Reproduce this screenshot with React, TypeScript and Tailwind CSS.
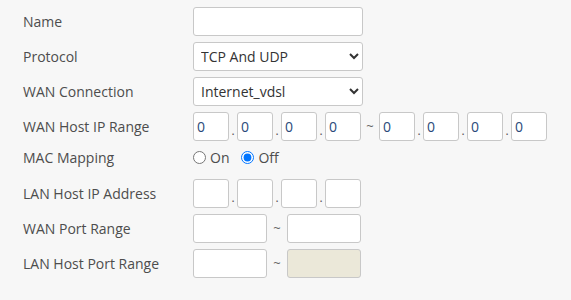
import React from 'react';

const box = 'h-[29px] rounded-[3px] border border-[#c8c8c8] px-[3px] text-[14px] text-[#2a4a7a] outline-none';

const Label = ({ children }: { children: React.ReactNode }) => (
  <div className="w-[170px] shrink-0 text-[14px] text-[#4d4d4d]">{children}</div>
);

const Row = ({ label, children, h = 'h-[35px]' }: { label: string; children: React.ReactNode; h?: string }) => (
  <div className={`flex items-center ${h}`}>
    <Label>{label}</Label>
    <div className="flex items-center">{children}</div>
  </div>
);

const Ip = ({ value = '' }: { value?: string }) => (
  <div className="flex items-center">
    {[0, 1, 2, 3].map((i) => (
      <React.Fragment key={i}>
        {i > 0 && <span className="w-[8px] text-center text-[12px] leading-none text-[#555] pt-[8px]">.</span>}
        <input className={`${box} w-[36px] bg-white`} defaultValue={value} />
      </React.Fragment>
    ))}
  </div>
);

export default function App() {
  return (
    <div
      className="h-[300px] w-[571px] bg-[#f7f7f7] px-[23px] pt-[4px]"
      style={{ fontFamily: '"Open Sans", "Noto Sans", sans-serif' }}
    >
      <Row label="Name">
        <input className={`${box} w-[170px] h-[28px] bg-white`} />
      </Row>
      <Row label="Protocol">
        <select className={`${box} w-[170px] h-[28px] bg-white text-[#333]`} defaultValue="TCP And UDP">
          <option>TCP And UDP</option>
          <option>TCP</option>
          <option>UDP</option>
        </select>
      </Row>
      <Row label="WAN Connection">
        <select className={`${box} w-[170px] h-[28px] bg-white text-[#333]`} defaultValue="Internet_vdsl">
          <option>Internet_vdsl</option>
        </select>
      </Row>
      <Row label="WAN Host IP Range">
        <Ip value="0" />
        <span className="w-[18px] text-center text-[13px] text-[#666]">~</span>
        <Ip value="0" />
      </Row>
      <div className="flex h-[32px] items-center pb-[6px]">
        <Label>MAC Mapping</Label>
        <label className="flex items-center text-[14px] text-[#4d4d4d]">
          <input type="radio" name="mac" className="m-0 mr-[4px] h-[13px] w-[13px] accent-[#0075ff]" />
          On
        </label>
        <label className="ml-[12px] flex items-center text-[14px] text-[#4d4d4d]">
          <input type="radio" name="mac" defaultChecked className="m-0 mr-[4px] h-[13px] w-[13px] accent-[#0075ff]" />
          Off
        </label>
      </div>
      <Row label="LAN Host IP Address">
        <Ip />
      </Row>
      <Row label="WAN Port Range">
        <input className={`${box} w-[74px] bg-white`} />
        <span className="w-[20px] text-center text-[13px] text-[#666]">~</span>
        <input className={`${box} w-[74px] bg-white`} />
      </Row>
      <Row label="LAN Host Port Range">
        <input className={`${box} w-[74px] bg-white`} />
        <span className="w-[20px] text-center text-[13px] text-[#666]">~</span>
        <input disabled className={`${box} w-[74px] bg-[#ebe8d9]`} />
      </Row>
    </div>
  );
}
